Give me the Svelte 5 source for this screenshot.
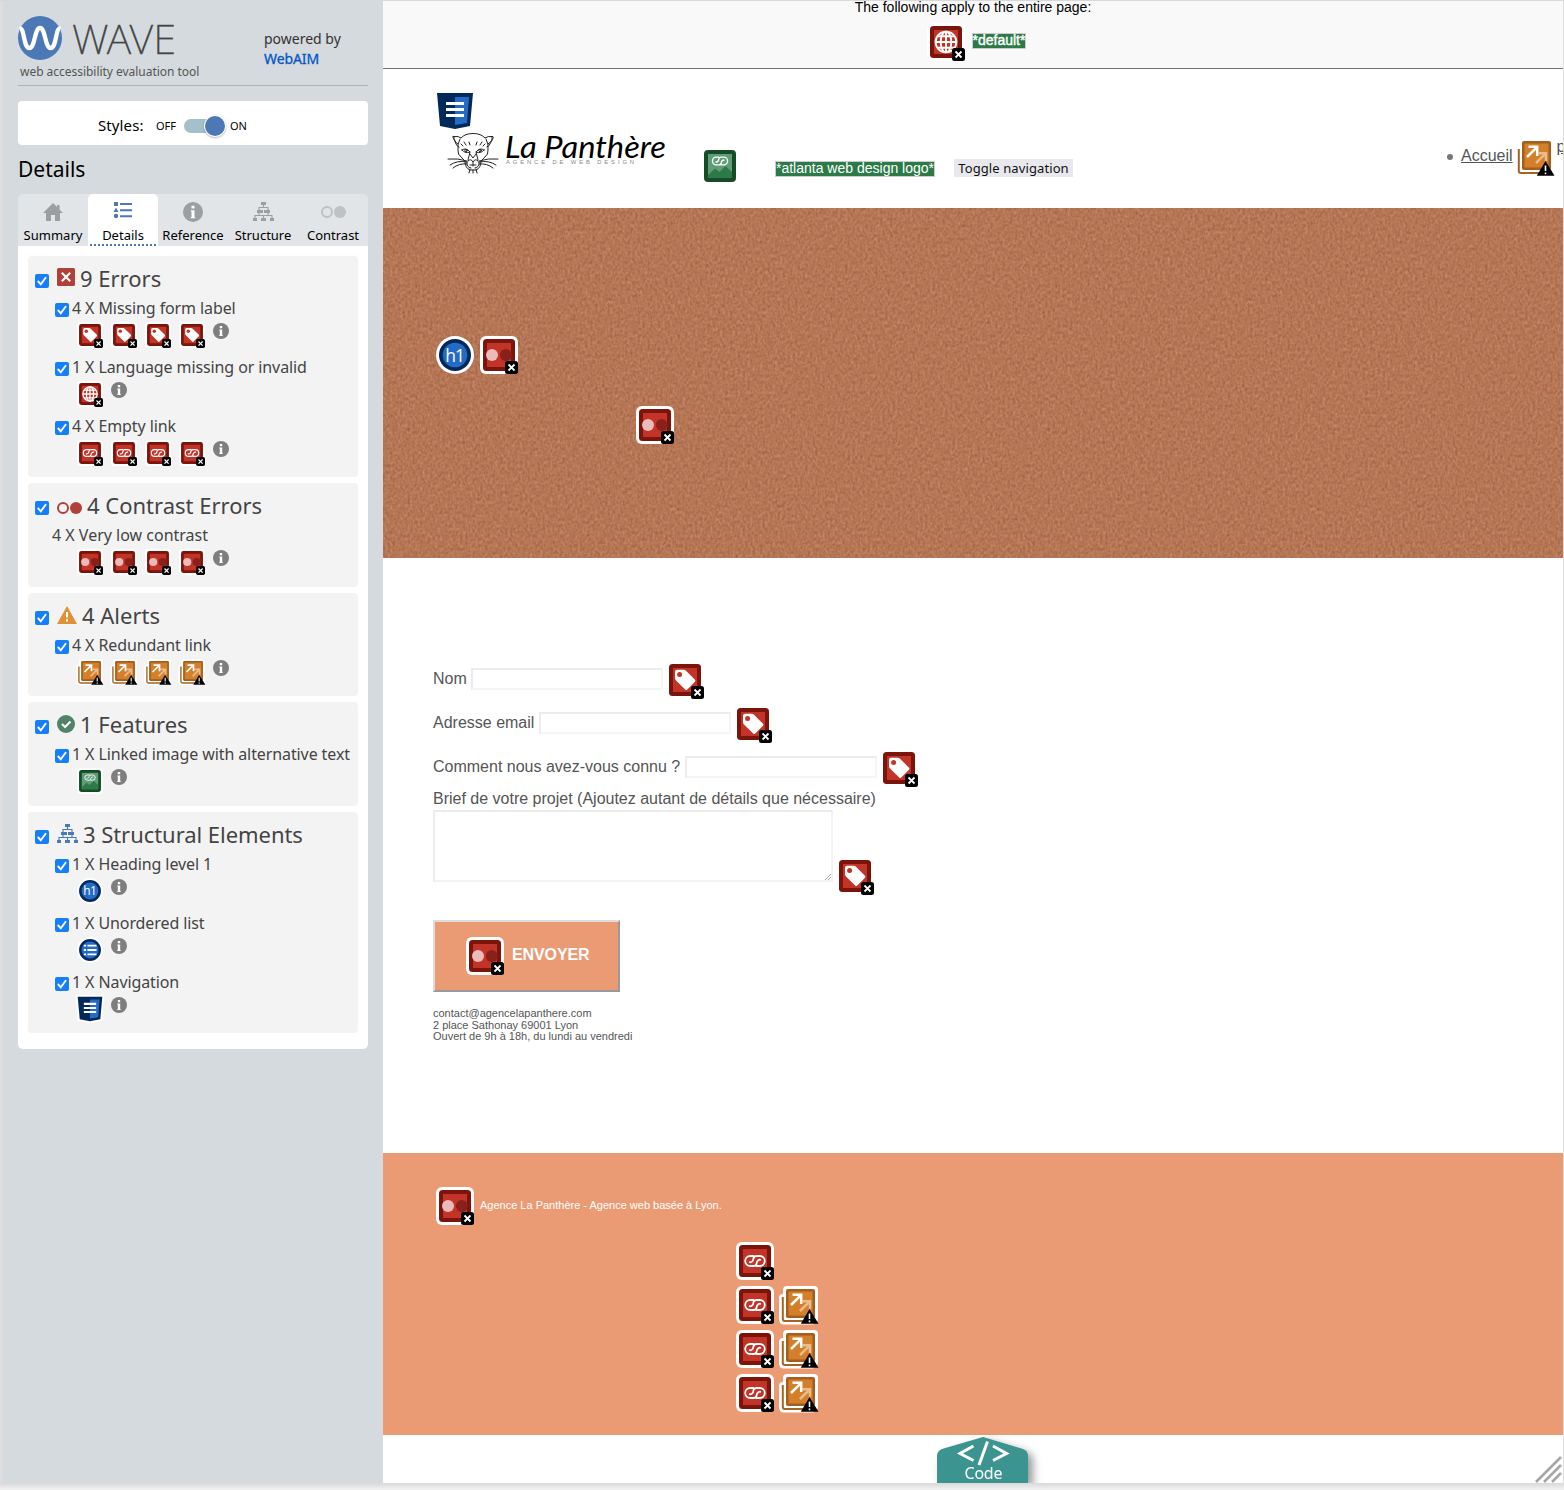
<script>
  const tabs = [
    { name: 'Summary', icon: 'home' },
    { name: 'Details', icon: 'list' },
    { name: 'Reference', icon: 'info' },
    { name: 'Structure', icon: 'tree' },
    { name: 'Contrast', icon: 'contrast' }
  ];
  const groups = [
    { title: '9 Errors', icon: 'error', items: [
      { label: '4 X Missing form label', kind: 'tag', n: 4 },
      { label: '1 X Language missing or invalid', kind: 'globe', n: 1 },
      { label: '4 X Empty link', kind: 'link', n: 4 }
    ] },
    { title: '4 Contrast Errors', icon: 'contrast', items: [
      { label: '4 X Very low contrast', kind: 'contrast', n: 4, plain: true }
    ] },
    { title: '4 Alerts', icon: 'alert', items: [
      { label: '4 X Redundant link', kind: 'redundant', n: 4 }
    ] },
    { title: '1 Features', icon: 'feature', items: [
      { label: '1 X Linked image with alternative text', kind: 'image', n: 1 }
    ] },
    { title: '3 Structural Elements', icon: 'tree', items: [
      { label: '1 X Heading level 1', kind: 'h1', n: 1 },
      { label: '1 X Unordered list', kind: 'ul', n: 1 },
      { label: '1 X Navigation', kind: 'nav', n: 1 }
    ] }
  ];
  const fields = ['Nom', 'Adresse email', 'Comment nous avez-vous connu ?'];
</script>

{#snippet chain()}
  <g fill="none" stroke="#fff" stroke-width="1.8" stroke-linecap="round" stroke-linejoin="round">
    <path d="M17.400 14H14.200a5 5 0 0 0 0 10H17.500Q20.300 24 20.600 21.300Q20.700 19.300 22.300 18.200Q23.200 17.500 24.300 17.800" />
    <path d="M20.600 24H23.800a5 5 0 0 0 0-10H20.500Q17.700 14 17.400 16.700Q17.300 18.700 15.700 19.800Q14.800 20.500 13.700 20.200" />
  </g>
{/snippet}

{#snippet mark(kind, small = false)}
  <svg class="mark" class:small viewBox="0 0 38 38">
    {#if kind === 'redundant'}
      <path d="M7 0H34Q38 0 38 4V33Q38 35 36 36L33 38.5H4Q-1 38.5-1 33V12Q-1 8 3 8V4Q3 0 7 0Z" fill="#fff" />
      <path d="M2.8 11V33Q2.8 35 5 35H30" fill="none" stroke="#a5631f" stroke-width="2" />
      <rect x="6" y="3" width="29" height="29" rx="2" fill="#a35f1d" />
      <rect x="8.5" y="5.5" width="24" height="24" fill="#d47f2a" />
      <g fill="none" stroke-width="2.5">
        <path d="M20 25L29.800 15.300M22.500 15.2H30V23" stroke="#e9bd8a" />
        <path d="M11 19L20.800 9.300M12.5 8.8H21.2V18" stroke="#fff" />
      </g>
      <path d="M29.5 23L38.5 37.8H20.8Z" />
      <path d="M29.5 27.5V33M29.5 34.5V36.3" stroke="#fff" stroke-width="1.6" />
    {:else if kind === 'h1' || kind === 'ul'}
      <circle cx="19" cy="19" r="19" fill="#fff" />
      <circle cx="19" cy="19" r="16" fill="#03295a" />
      <circle cx="19" cy="19" r="12.3" fill="#246bc6" />
      {#if kind === 'h1'}
        <text x="18.700" y="25.5" text-anchor="middle" class="h1text">h1</text>
      {:else}
        <path d="M10 12.500h3.300m2 0H28.500M10 19h3.300m2 0H28.500M10 25.500h3.300m2 0H28.500" stroke="#fff" stroke-width="2.600" />
      {/if}
    {:else if kind === 'nav'}
      <path d="M-2-2H40L37 36L19 40L1 36Z" fill="#fff" />
      <path d="M1 1H37L34 34L19 37L4 34Z" fill="#03295a" />
      <path d="M19 5H33L31 31L19 33Z" fill="#246bc6" />
      <path d="M10 11.5H28M10 17.5H28M10 23.5H28" stroke="#fff" stroke-width="3" />
    {:else if kind === 'image'}
      <rect width="38" height="38" rx="6" fill="#fff" />
      <rect x="3" y="3" width="32" height="32" rx="4" fill="#164b28" />
      <rect x="7" y="7" width="24" height="24" fill="#5f9d79" />
      <path d="M7 28L14 21.5L18.5 25L24.5 19L31 25V31H7Z" fill="#2c7a48" />
      <g transform="translate(4.4 -.6) scale(.77)">{@render chain()}</g>
    {:else}
      <rect width="38" height="38" rx="6" fill="#fff" />
      <rect x="3" y="3" width="32" height="32" rx="3.5" fill="#7b150c" />
      <rect x="7" y="7" width="24" height="24" fill="#c23428" />
      {#if kind === 'tag'}
        <path d="M11 8.7H17.5Q19 8.7 20 9.7L29 18.7Q29.8 19.7 29 20.7L21.3 28.6Q20.2 29.6 19.2 28.6L10 19.5Q9 18.5 9 17.2V11Q9 8.7 11 8.7Z" fill="#fff" />
        <circle cx="13.6" cy="13.6" r="2.5" fill="#c23428" />
      {:else if kind === 'globe'}
        <g fill="none" stroke="#fff" stroke-width="1.9">
          <circle cx="19" cy="19" r="10.4" />
          <ellipse cx="19" cy="19" rx="5.3" ry="10.4" />
          <path d="M19 8V30M8.5 19H29.5M10.4 13.3H27.6M10.4 24.7H27.6" />
        </g>
      {:else if kind === 'link'}
        {@render chain()}
      {:else}
        <circle cx="12" cy="19" r="6" fill="#ebbabb" />
        <circle cx="25.8" cy="19" r="6" fill="#89211a" />
      {/if}
      <rect x="25" y="25" width="13" height="13" rx="2.5" />
      <path d="M28.5 28.5L34.5 34.5M34.5 28.5L28.5 34.5" stroke="#fff" stroke-width="1.8" />
    {/if}
  </svg>
{/snippet}

{#snippet glyph(kind)}
  {#if kind === 'home'}
    <svg width="20" height="18" viewBox="0 0 20 18"><path d="M10 0L0 10H3V18H8V12H12V18H17V10H20L16.5 6.5V2H14V4Z" fill="#9c9ea0" /></svg>
  {:else if kind === 'list'}
    <svg width="20" height="18" viewBox="0 0 20 18" fill="#4c78b5"><path d="M1 1H5V5H1ZM3 6.5L5.5 11H.5Z" /><circle cx="3" cy="15" r="2.2" /><path d="M7 2H19V4H7ZM7 8.3H19V10.3H7ZM7 14.3H19V16.3H7Z" /></svg>
  {:else if kind === 'info'}
    <svg class="info" viewBox="0 0 16 16"><circle cx="8" cy="8" r="8" fill="currentColor" /><path d="M6.800 3H9.200V5.2H6.800ZM6.300 6.5H9.200V12H9.700V13H6.300V12H6.800V7.5H6.300Z" fill="#fff" /></svg>
  {:else if kind === 'tree'}
    <svg width="21" height="19" viewBox="0 0 21 19"><path d="M8 0h5v3H8zM4 8h4v3H4zM13 8h4v3h-4zM8 8h2v3H8zM11 8h2v3h-2zM0 16h4v3H0zM8 16h5v3H8zM17 16h4v3h-4z" fill="currentColor" /><path d="M10.5 3V6M6 8V5.5H15V8M6 11V13.5M15 11V13.5M2 16V13.5H19V16M10.5 16V13.5" fill="none" stroke="currentColor" stroke-width="1.1" /></svg>
  {:else if kind === 'contrast'}
    <svg width="25" height="12" viewBox="0 0 25 12"><circle cx="6" cy="6" r="5" fill="none" stroke="currentColor" stroke-width="2" /><circle cx="19" cy="6" r="6" fill="currentColor" /></svg>
  {:else if kind === 'error'}
    <svg width="18" height="18" viewBox="0 0 18 18"><rect width="18" height="18" rx="1.5" fill="#b0413a" /><path d="M4.8 4.8L13.2 13.2M13.2 4.8L4.8 13.2" stroke="#fff" stroke-width="2.2" /></svg>
  {:else if kind === 'alert'}
    <svg width="20" height="18" viewBox="0 0 20 18"><path d="M10 0L20 18H0Z" fill="#df9135" /><path d="M10 6V11.5M10 13.2V15.6" stroke="#fff" stroke-width="2" /></svg>
  {:else}
    <svg width="18" height="18" viewBox="0 0 18 18"><circle cx="9" cy="9" r="9" fill="#528268" /><path d="M5 9L8 12L13.5 6.5" fill="none" stroke="#fff" stroke-width="2" /></svg>
  {/if}
{/snippet}

{#snippet check()}
  <svg class="check" viewBox="0 0 14 14"><rect width="14" height="14" rx="2" fill="#157efb" /><path d="M3.3 7.5L5.8 10.3L10.6 3.8" fill="none" stroke="#fff" stroke-width="1.9" stroke-linecap="round" /></svg>
{/snippet}

<div class="app">
  <aside>
    <header class="brand">
      <div class="wave">
        <div class="name">
          <svg width="44" height="44" viewBox="0 0 44 44">
            <circle cx="22" cy="22" r="22" fill="#4c78b5" />
            <path d="M1.500 12.500Q4 12 5 17C7 25 7.500 32 11.500 32C17 32 16.500 12 22 12C27.500 12 27 32 32.500 32C36.500 32 37 25 39 17Q40 12 42.500 12.500" fill="none" stroke="#fff" stroke-width="4.300" />
          </svg>
          <svg width="106" height="44" viewBox="0 0 106 44"><text class="wordmark" x="2" y="38" textLength="104" lengthAdjust="spacingAndGlyphs">WAVE</text></svg>
        </div>
        <div class="tagline">web accessibility evaluation tool</div>
      </div>
      <div class="powered">powered by<br /><span>WebAIM</span></div>
    </header>
    <div class="styles">
      <span class="lbl">Styles:</span><span class="off">OFF</span>
      <span class="switch"><i></i></span><span class="on">ON</span>
    </div>
    <h2>Details</h2>
    <nav class="tabs">
      {#each tabs as t}
        <div class="tab" class:active={t.name === 'Details'} class:pale={t.name === 'Contrast'}>
          <span class="ic">{@render glyph(t.icon)}</span><span>{t.name}</span>
        </div>
      {/each}
    </nav>
    <div class="panel">
      {#each groups as g}
        <section>
          <h3 class={g.icon}>
            {@render check()}<span class="gi">{@render glyph(g.icon)}</span><span class="title">{g.title}</span>
          </h3>
          {#each g.items as it}
            <div class="item" class:plain={it.plain}>
              <div class="label">{#if !it.plain}{@render check()}{/if}<span>{it.label}</span></div>
              <div class="icons">
                {#each Array(it.n) as _}{@render mark(it.kind, true)}{/each}
                {@render glyph('info')}
              </div>
            </div>
          {/each}
        </section>
      {/each}
    </div>
  </aside>

  <main>
    <div class="notice">
      <div>The following apply to the entire page:</div>
      <div class="lang">{@render mark('globe')}<span class="alt bold">*default*</span></div>
    </div>
    <div class="topbar">
      <div class="logo">
        {@render mark('nav')}
        <svg class="panther" width="225" height="46" viewBox="0 0 225 46">
          <g fill="none" stroke="#222" stroke-width="1" stroke-linecap="round">
            <path d="M10 9Q6 3 9 4.500Q14 4 16 6Q20 1.500 28 1.500Q36 1.500 40 6Q43 4 47 4.500Q50 4 46 10Q44 15 42 15M10 9Q11 14 14 15M9 5Q8 9 13 12M47 5Q48 9 43 12M15 7Q12 12 13 18Q12 22 17 26L20 29Q20 36 25 38H31Q36 36 36 29L39 26Q44 22 43 18Q44 12 41 7" />
            <path d="M17 18Q21 15 25 20Q20 22 17 18ZM39 18Q35 15 31 20Q36 22 39 18ZM25 22L28 26L31 22M25 20L23 28M31 20L33 28M23 29Q26 26 28 30Q30 26 33 29M22 30Q21 35 26 36M34 30Q35 35 30 36M25 33H31M28 30V34M18 14L16 12M21 13L19 10M25 13L24 10M38 14L40 12M35 13L37 10M31 13L32 10M25 37L24 41M31 37L32 41M28 38V41" />
            <path d="M22 29Q13 26 3 27M22 30Q12 28 5 33M22 32Q14 31 8 36M34 29Q43 26 53 27M34 30Q44 28 51 33M34 32Q42 31 48 36" />
            <circle cx="21" cy="18.500" r="1.200" /><circle cx="35" cy="18.500" r="1.200" />
          </g>
          <text class="script" x="60" y="25.500" textLength="161" lengthAdjust="spacingAndGlyphs">La Panthère</text>
          <text class="agency" x="61" y="32" textLength="128">AGENCE DE WEB DESIGN</text>
        </svg>
      </div>
      <div class="logoalt">{@render mark('image')}<span class="alt">*atlanta web design logo*</span></div>
      <span class="toggle">Toggle navigation</span>
      <div class="menu"><span class="dot"></span><a href="#top">Accueil</a>{@render mark('redundant')}<a class="cut" href="#page">page</a></div>
    </div>

    <div class="hero">
      <svg class="texture" width="1180" height="350">
        <filter id="paper" x="0" y="0" width="100%" height="100%" color-interpolation-filters="sRGB">
          <feTurbulence type="fractalNoise" baseFrequency="0.4 0.3" numOctaves="3" seed="4" />
          <feColorMatrix values=".20 .09 0 0 .565  .18 .08 0 0 .332  .16 .07 0 0 .222  0 0 0 0 1" />
        </filter>
        <rect width="1180" height="350" filter="url(#paper)" />
      </svg>
      <div class="row1">{@render mark('h1')}{@render mark('contrast')}</div>
      <div class="row2">{@render mark('contrast')}</div>
    </div>

    <div class="form">
      {#each fields as f}
        <div class="field"><span>{f}</span><div class="input"></div>{@render mark('tag')}</div>
      {/each}
      <div class="brief">Brief de votre projet (Ajoutez autant de détails que nécessaire)</div>
      <div class="arearow">
        <div class="area"><svg width="6" height="6" viewBox="0 0 6 6"><path d="M0 6L6 0M3 6L6 3" stroke="#888" stroke-width=".8" /></svg></div>
        {@render mark('tag')}
      </div>
      <div class="send">{@render mark('contrast')}<span>ENVOYER</span></div>
      <div class="contact">contact@agencelapanthere.com<br />2 place Sathonay 69001 Lyon<br />Ouvert de 9h à 18h, du lundi au vendredi</div>
    </div>

    <footer>
      <div class="credit">{@render mark('contrast')}<span>Agence La Panthère - Agence web basée à Lyon.</span></div>
      <div class="links">
        <div>{@render mark('link')}</div>
        {#each Array(3) as _}<div>{@render mark('link')}{@render mark('redundant')}</div>{/each}
      </div>
    </footer>
    <div class="bottom">
      <svg class="code" width="104" height="46" viewBox="0 0 104 46">
        <path d="M0 46V19Q0 14 5 12L46 0L86 12Q91 14 91 19V46Z" fill="#3b948f" />
        <path d="M36.500 9L23 16.500L36.500 23.500M56 9L69.500 16.500L56 23.500M50.500 4.500L42 28" fill="none" stroke="#fff" stroke-width="3" />
        <text x="46.500" y="42" text-anchor="middle" class="codetext" textLength="38">Code</text>
      </svg>
      <svg class="grip" width="26" height="26" viewBox="0 0 26 26"><path d="M1 25L26 0M9 25L26 8M17 25L26 16" stroke="#a5a5a5" stroke-width="2.500" /></svg>
    </div>
  </main>
</div>

<style>
  :global(body) { background: #f4f4f4; }
  .app {
    box-sizing: border-box; width: 1564px; height: 1490px; padding: 1px 1px 7px 3px;
    display: flex; overflow: hidden;
    background: linear-gradient(#d8d8d8 0 1px, transparent 1px 1483px, #d9d9d9 1483px, #f3f3f3 1490px), #dedede;
    font-family: "Noto Sans", "Open Sans", sans-serif;
  }
  svg { display: block; flex: none; overflow: visible; }
  aside { box-sizing: border-box; width: 380px; padding: 15px; background: #d4dadd; flex: none; }
  .brand { height: 69px; border-bottom: 1px solid #adb4b7; display: flex; justify-content: space-between; }
  .name { display: flex; gap: 8px; }
  .wordmark { font: 200 41px "Noto Sans", "Open Sans", sans-serif; fill: #444; stroke: #444; stroke-width: .3px; }
  .tagline { font-size: 12px; line-height: 16px; margin: 4px 0 0 2px; color: #555; letter-spacing: -.03px; }
  .powered { width: 104px; padding-top: 13px; font-size: 14px; line-height: 20px; color: #333; }
  .powered span { color: #0556c9; -webkit-text-stroke: .3px #0556c9; letter-spacing: -.1px; }
  .styles { box-sizing: border-box; height: 44px; margin-top: 15px; padding-top: 5px; padding-left: 80px; background: #fff; border-radius: 4px; display: flex; align-items: center; }
  .lbl { font-size: 15px; width: 58px; margin-top: -2px; letter-spacing: .1px; }
  .off { font-size: 11px; width: 28px; }
  .on { font-size: 11px; margin-left: 5px; }
  .switch { width: 41px; height: 14px; border-radius: 7px; background: #a3c0cb; display: flex; align-items: center; justify-content: flex-end; }
  .switch i { width: 20px; height: 20px; border-radius: 50%; background: #4c78b5; box-shadow: 0 0 0 1px #fff, 0 1px 3px #555; }
  h2 { margin: 9px 0 10px; font-size: 21px; line-height: 30px; font-weight: 400; }
  .tabs { display: flex; height: 52px; background: #e1e5e8; border-radius: 5px 5px 0 0; font-size: 13px; }
  .tab { box-sizing: border-box; width: 70px; display: flex; flex-direction: column; align-items: center; color: #9c9ea0; }
  .tab .ic { height: 32px; display: flex; align-items: center; padding-top: 3px; box-sizing: border-box; }
  .tab > span:last-child { color: #000; line-height: 18px; }
  .tab .ic :global(.info) { width: 20px; height: 20px; margin-top: 0; }
  .tab.active { background: #fff; border-radius: 5px 5px 0 0; background-image: repeating-linear-gradient(90deg, #4c78b5 0 2px, #fff 2px 4px); background-size: 66px 2px; background-position: 2px 50px; background-repeat: no-repeat; }
  .tab.active .ic { padding-top: 0; }
  .tab.pale { color: #bfc1c3; }
  .panel { background: #fff; padding: 9.5px 10px 16px; border-radius: 0 0 5px 5px; display: flex; flex-direction: column; gap: 6px; }
  section { background: #f3f3f3; border-radius: 4px; padding: 4px 0 2.5px; color: #444; }
  h3 { margin: 0; height: 38px; font-size: 22px; font-weight: 400; display: flex; align-items: center; padding-left: 7px; }
  .title { margin-top: -2px; }
  .gi { margin-left: 8px; margin-right: 5px; margin-top: -3px; }
  .contrast .gi { color: #b0413a; margin-top: 4px; }
  .tree .gi { color: #4c78b5; }
  .tree .title { letter-spacing: -.05px; }
  .alert .gi { margin-top: -1px; }
  .check { width: 14px; height: 14px; margin-top: 4px; }
  .item { height: 59px; }
  .label { height: 20px; line-height: 20px; padding-left: 27px; display: flex; align-items: center; gap: 3px; font-size: 16px; white-space: nowrap; letter-spacing: -.1px; }
  .plain .label { padding-left: 24px; letter-spacing: 0; }
  .icons { display: flex; gap: 8px; padding: 4px 0 0 49px; color: #7e7e7e; }
  .info { width: 16px; height: 16px; margin-top: 1px; }
  .mark { width: 38px; height: 38px; }
  .mark.small { width: 26px; height: 26px; }
  .h1text { font: 17.500px "Open Sans", "Noto Sans", sans-serif; fill: #fff; letter-spacing: -.8px; }

  main { width: 1180px; height: 1482px; background: #fff; overflow: hidden; font-family: "Liberation Sans", Arial, sans-serif; color: #555; font-size: 16px; flex: none; }
  .notice { box-sizing: border-box; height: 68px; background: #f9f9f9; border-bottom: 1px solid #6f746f; color: #000; font-size: 14px; line-height: 13px; text-align: center; }
  .lang { display: flex; justify-content: center; align-items: center; gap: 7px; margin-top: 9px; padding-left: 7px; }
  .alt { background: #2c7a48; color: #fff; border: 1px solid #ccc; font-size: 14px; line-height: 13px; height: 14px; white-space: nowrap; }
  .alt.bold { margin-top: -2px; -webkit-text-stroke: .4px #fff; }
  .topbar { height: 139px; display: flex; }
  .topbar > * { flex: none; }
  .logo { padding: 23px 0 0 53px; width: 265px; }
  .panther { margin: 2px 0 0 9px; }
  .script { font: italic 400 30px Lato, sans-serif; fill: #000; }
  .agency { font: 5.800px "Liberation Sans", sans-serif; fill: #888; }
  .logoalt { display: flex; padding-top: 78px; gap: 36px; }
  .logoalt .alt { margin-top: 14px; }
  .toggle { box-sizing: border-box; width: 119px; height: 18px; margin: 90px 0 0 19px; background: #e9e9ed; color: #111; font: 13px/18px "Noto Sans", sans-serif; text-align: center; white-space: nowrap; letter-spacing: .1px; }
  .menu { margin-left: 374px; padding-top: 69px; display: flex; }
  .menu a { color: #555; line-height: 36px; text-decoration: underline; }
  .menu .mark { margin-left: 3px; }
  .menu .cut { margin: -9px 0 0 3px; }
  .dot { width: 6px; height: 6px; border-radius: 3px; background: #777; margin: 16px 8px 0 0; }
  .hero { height: 350px; position: relative; background: #b57555; }
  .texture { position: absolute; inset: 0; }
  .row1 { position: relative; display: flex; gap: 6px; padding: 128px 0 0 53px; }
  .row2 { position: relative; padding: 32px 0 0 253px; }
  .form { box-sizing: border-box; height: 595px; padding: 100px 0 0 50px; }
  .field { height: 44px; display: flex; align-items: center; }
  .field span { margin-top: -3px; }
  .input { box-sizing: border-box; width: 192px; height: 22px; margin: -2px 3px 0 4.450px; border: 2px solid #f5f5f5; border-top-color: #ececec; border-left-color: #ececec; }
  .brief { height: 20px; line-height: 18px; white-space: nowrap; }
  .arearow { display: flex; align-items: flex-end; gap: 3px; height: 85px; }
  .area { box-sizing: border-box; width: 400px; height: 72px; margin-bottom: 13px; border: 2px solid #f3f3f3; border-top-color: #ececec; border-left-color: #ececec; display: flex; justify-content: flex-end; align-items: flex-end; }
  .send { box-sizing: border-box; width: 187px; height: 72px; margin-top: 25px; border: 2px solid; border-color: #ddd #999 #999 #ddd; background: #ea9b74; color: #fff; display: flex; align-items: center; padding-left: 31px; gap: 8px; font-weight: 700; }
  .send span { margin-top: -3px; letter-spacing: -.1px; }
  .contact { margin-top: 16px; font-size: 11px; line-height: 11.500px; }
  footer { box-sizing: border-box; height: 282px; background: #ea9b74; padding: 34px 0 0 53px; }
  .credit { display: flex; align-items: center; gap: 6px; font-size: 11px; color: #fff; }
  .credit span { margin-top: -2px; }
  .links { padding: 17px 0 0 300px; display: grid; gap: 6px; }
  .links div { display: flex; gap: 6px; }
  .bottom { height: 48px; display: flex; padding: 2px 2px 0 554px; justify-content: space-between; box-sizing: border-box; }
  .code { filter: drop-shadow(5px 4px 4px #999); }
  .codetext { font: 16px "Noto Sans", sans-serif; fill: #fff; }
  .grip { margin-top: 20px; }
</style>
